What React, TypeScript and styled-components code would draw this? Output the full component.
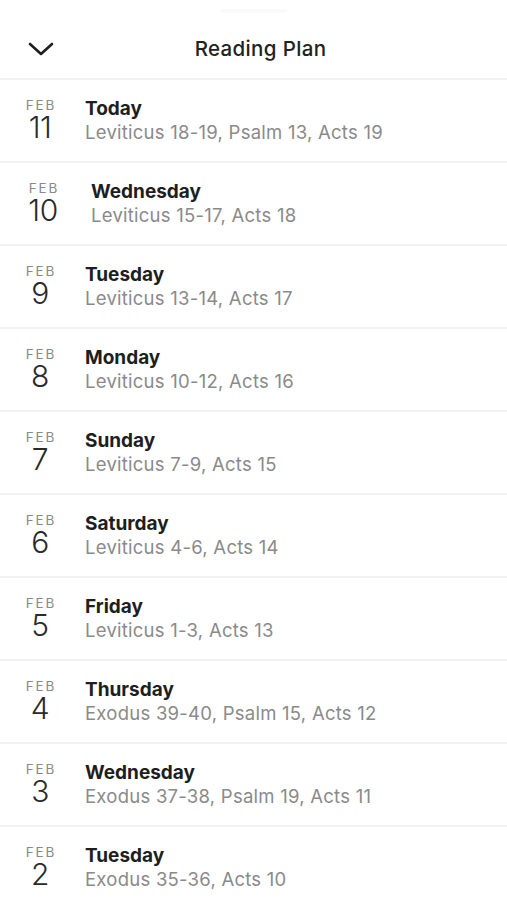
import React from "react";
import styled, { createGlobalStyle } from "styled-components";

const Global = createGlobalStyle`
  html, body { margin: 0; padding: 0; background: #fff; }
  body { font-family: Inter, "Noto Sans", "Liberation Sans", sans-serif; -webkit-font-smoothing: antialiased; }
`;

const Page = styled.div`
  width: 507px;
  height: 900px;
  overflow: hidden;
  background: #fff;
  display: flex;
  flex-direction: column;
`;

const Header = styled.header`
  position: relative;
  height: 78px;
  display: flex;
  align-items: flex-end;
  justify-content: center;
  border-bottom: 2px solid #f2f2f2;
  flex-shrink: 0;
`;

const Grabber = styled.div`
  position: absolute;
  top: 9px;
  left: 50%;
  transform: translateX(-50%);
  width: 66px;
  height: 4px;
  border-radius: 2px;
  background: #fafafa;
`;

const BackButton = styled.button`
  position: absolute;
  left: 27px;
  top: 38px;
  width: 28px;
  height: 22px;
  padding: 0;
  border: 0;
  background: none;
  display: flex;
  align-items: center;
  justify-content: center;
`;

const Title = styled.h1`
  margin: 0 0 16px;
  font-size: 20.5px;
  line-height: 26px;
  font-weight: 500;
  color: #222;
  letter-spacing: 0.35px;
  transform: translateX(7px);
`;

const List = styled.ul`
  list-style: none;
  margin: 0;
  padding: 0;
`;

const Row = styled.li<{ $shift: number }>`
  height: 81px;
  border-bottom: 2px solid #f2f2f2;
  display: flex;
  align-items: center;
  padding-left: ${(p) => 12 + p.$shift}px;
`;

const DateCol = styled.div`
  width: 56px;
  display: flex;
  flex-direction: column;
  align-items: center;
  margin-top: -2px;
`;

const Month = styled.span`
  display: block;
  font-size: 13.5px;
  letter-spacing: 1.8px;
  color: #8a8a8a;
  line-height: 14px;
  margin-left: 1.8px;
`;

const Day = styled.span`
  display: block;
  font-size: 30px;
  font-weight: 300;
  color: #2a2a2a;
  line-height: 30px;
  letter-spacing: -0.5px;
`;

const TextCol = styled.div<{ $shift: number }>`
  margin-left: ${(p) => 17 + p.$shift}px;
  display: flex;
  flex-direction: column;
`;

const DayName = styled.span`
  font-size: 19px;
  font-weight: 700;
  color: #1e1e1e;
  line-height: 24px;
`;

const Readings = styled.span`
  font-size: 18.5px;
  color: #8a8a8a;
  line-height: 23px;
  letter-spacing: 0.25px;
`;

const Chevron = () => (
  <svg width="26" height="16" viewBox="0 0 26 16" fill="none">
    <path d="M2 3 L13 13 L24 3" stroke="#1e1e1e" strokeWidth="2.6" strokeLinecap="round" strokeLinejoin="round" />
  </svg>
);

const items = [
  { day: "11", name: "Today", text: "Leviticus 18-19, Psalm 13, Acts 19", shift: 0, tshift: 0 },
  { day: "10", name: "Wednesday", text: "Leviticus 15-17, Acts 18", shift: 3, tshift: 3 },
  { day: "9", name: "Tuesday", text: "Leviticus 13-14, Acts 17", shift: 0, tshift: 0 },
  { day: "8", name: "Monday", text: "Leviticus 10-12, Acts 16", shift: 0, tshift: 0 },
  { day: "7", name: "Sunday", text: "Leviticus 7-9, Acts 15", shift: 0, tshift: 0 },
  { day: "6", name: "Saturday", text: "Leviticus 4-6, Acts 14", shift: 0, tshift: 0 },
  { day: "5", name: "Friday", text: "Leviticus 1-3, Acts 13", shift: 0, tshift: 0 },
  { day: "4", name: "Thursday", text: "Exodus 39-40, Psalm 15, Acts 12", shift: 0, tshift: 0 },
  { day: "3", name: "Wednesday", text: "Exodus 37-38, Psalm 19, Acts 11", shift: 0, tshift: 0 },
  { day: "2", name: "Tuesday", text: "Exodus 35-36, Acts 10", shift: 0, tshift: 0 },
];

export default function App() {
  return (
    <Page>
      <Global />
      <Header>
        <Grabber />
        <BackButton aria-label="Close">
          <Chevron />
        </BackButton>
        <Title>Reading Plan</Title>
      </Header>
      <List>
        {items.map((it, i) => (
          <Row key={i} $shift={it.shift}>
            <DateCol>
              <Month>FEB</Month>
              <Day>{it.day}</Day>
            </DateCol>
            <TextCol $shift={it.tshift}>
              <DayName>{it.name}</DayName>
              <Readings>{it.text}</Readings>
            </TextCol>
          </Row>
        ))}
      </List>
    </Page>
  );
}
